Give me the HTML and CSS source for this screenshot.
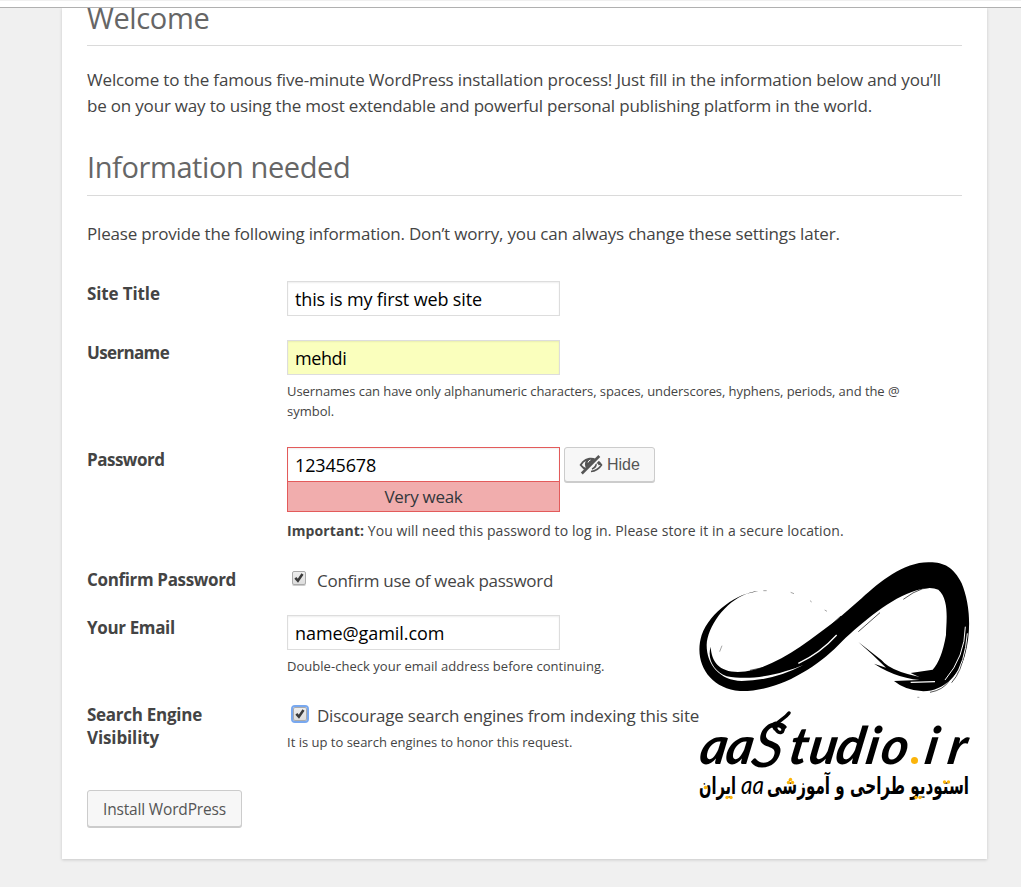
FILE: index.html
```html
<!DOCTYPE html>
<html lang="en">
<head>
<meta charset="utf-8">
<title>WordPress Installation</title>
<link rel="stylesheet" href="styles.css">
</head>
<body>
<div class="browser-edge"></div>
<main class="card">
  <h1 class="heading heading-first"><span class="t-welcome">Welcome</span></h1>
  <p class="intro"><span class="t-intro1">Welcome to the famous five-minute WordPress installation process! Just fill in the information below and you’ll</span><br><span class="t-intro2">be on your way to using the most extendable and powerful personal publishing platform in the world.</span></p>
  <h1 class="heading heading-second"><span class="t-info">Information needed</span></h1>
  <p class="lead"><span class="t-lead">Please provide the following information. Don’t worry, you can always change these settings later.</span></p>
  <form class="form">
    <div class="row row-title">
      <div class="label"><span class="t-l1">Site Title</span></div>
      <div class="cell"><div class="input"><span class="t-v1">this is my first web site</span></div></div>
    </div>
    <div class="row row-user">
      <div class="label"><span class="t-l2">Username</span></div>
      <div class="cell"><div class="input input-filled"><span class="t-v2">mehdi</span></div>
        <p class="hint"><span class="t-h1">Usernames can have only alphanumeric characters, spaces, underscores, hyphens, periods, and the @</span><br><span class="t-h2">symbol.</span></p></div>
    </div>
    <div class="row row-pass">
      <div class="label"><span class="t-l3">Password</span></div>
      <div class="cell">
        <div class="pass-line">
          <div class="pass-box"><div class="input input-weak"><span class="t-v3">12345678</span></div><div class="strength"><span class="t-weak">Very weak</span></div></div>
          <div class="button hide-button">
            <svg class="eye" viewBox="0 0 24 20" width="24" height="20">
              <path d="M.5 10C4.500 4 8.500 2.800 12 2.800Q14.500 2.800 17 4L8 16.500Q3.500 14 .5 10Z" fill="#555"/>
              <path d="M2.800 10Q4.500 7 6.800 6Q5 9.500 7 13Q4.500 12.200 2.800 10Z" fill="#f7f7f7"/>
              <path d="M9 7.500Q9.500 5.500 11.500 5" fill="none" stroke="#f7f7f7" stroke-width="1"/>
              <path d="M18 5.500Q21 7.500 22.500 10Q18.500 16 12 16.500M17 8.500Q17.500 12 13 14M17.700 7Q20 8.500 20.500 10" fill="none" stroke="#555" stroke-width="1.600"/>
              <path d="M21 1.800L4.500 18.300" stroke="#f7f7f7" stroke-width="4"/>
              <path d="M20.300 1L2.800 18.500" stroke="#555" stroke-width="2.700"/>
            </svg><span class="t-hide">Hide</span>
          </div>
        </div>
        <p class="hint hint-pass"><span class="t-h3"><b>Important:</b> You will need this password to log in. Please store it in a secure location.</span></p>
      </div>
    </div>
    <div class="row row-confirm">
      <div class="label"><span class="t-l4">Confirm Password</span></div>
      <div class="cell check-line"><span class="check"><svg viewBox="0 0 12 12" width="12" height="12"><path d="M2.300 5.800L4.900 8.700L9.500 2" fill="none" stroke="#3b3b3b" stroke-width="2.500"/></svg></span><span class="t-c1">Confirm use of weak password</span></div>
    </div>
    <div class="row row-email">
      <div class="label"><span class="t-l4">Your Email</span></div>
      <div class="cell"><div class="input"><span class="t-v4">name@gamil.com</span></div>
        <p class="hint"><span class="t-h4">Double-check your email address before continuing.</span></p></div>
    </div>
    <div class="row row-search">
      <div class="label"><span class="t-l6">Search Engine</span><br><span class="t-l1">Visibility</span></div>
      <div class="cell"><div class="check-line"><span class="check check-focus"><svg viewBox="0 0 12 12" width="12" height="12"><path d="M2.300 5.800L4.900 8.700L9.500 2" fill="none" stroke="#3b3b3b" stroke-width="2.500"/></svg></span><span class="t-c2">Discourage search engines from indexing this site</span></div>
        <p class="hint hint-search"><span>It is up to search engines to honor this request.</span></p></div>
    </div>
    <div class="button install"><span class="t-install">Install WordPress</span></div>
  </form>
</main>
<svg class="watermark" viewBox="0 0 290 260" width="290" height="260">
  <g transform="scale(.33333)">
    <path d="M205 123C145 128 60 185 35 255C10 335 55 415 150 423C270 426 390 345 455 275C520 215 600 145 680 121Q720 108 745 119C780 150 768 220 768 255Q755 330 728 359L662 369L705 389L612 393Q645 421 700 424C765 423 810 370 825 315C845 240 840 160 815 100C790 50 760 36 715 37C640 37 570 95 515 145L440 210C360 270 280 335 190 360C100 380 65 345 62 290C50 330 75 365 110 379C200 395 290 365 340 345Q250 392 155 393C90 391 50 345 50 285C52 230 105 155 170 131Z"/>
    <path d="M325 340Q390 310 440 255" fill="none" stroke="#fff" stroke-width="4"/>
    <path d="M180 361Q300 345 385 262T450 204M505 245L570 188M640 148Q700 102 748 114M833 190Q840 280 800 370M720 427Q760 420 778 392M825 300Q815 365 785 398" fill="none" stroke="#000" stroke-width="2"/>
    <path d="M826 230Q825 320 765 390M832 250Q825 340 790 385" fill="none" stroke="#fff" stroke-width="3"/>
    <path d="M505 276L575 331Q605 370 735 389Q640 398 552 341L588 353Q550 315 505 276Z"/>
    <path d="M662 397L735 395" stroke="#fff" stroke-width="4"/>
    <path d="M220 122h10M302 127l10 4M360 152l5 4M404 180l7 4M682 442h6M89 305l7-18" stroke="#777" stroke-width="2"/>
  </g>
  <text class="brand" transform="translate(0 214) skewX(-10)"><tspan x="8" y="0">a</tspan><tspan x="34">a</tspan><tspan class="cap" x="60" y="3">S</tspan><tspan x="97" y="0">t</tspan><tspan x="117">u</tspan><tspan x="144">d</tspan><tspan x="174">i</tspan><tspan x="189">o</tspan></text>
  <path d="M85 30C80 24 88 22 92 27C96 34 88 36 86 30C84 23 94 21 99 14" transform="translate(0 149)" fill="none" stroke="#000" stroke-width="3.500" stroke-linecap="round"/>
  <circle cx="224.500" cy="210.500" r="3.500" fill="#fbb40a"/>
  <text class="brand" transform="translate(0 214) skewX(-10)"><tspan x="233">i</tspan><tspan x="256">r</tspan></text>
  <text class="persian" x="279" y="244" direction="rtl" textLength="202" lengthAdjust="spacingAndGlyphs">استودیو طراحی و آموزشی</text>
  <text class="aa" x="51" y="244" textLength="23" lengthAdjust="spacingAndGlyphs">aa</text>
  <text class="persian" x="46" y="244" direction="rtl" textLength="37" lengthAdjust="spacingAndGlyphs">ایران</text>
  <g fill="#fbb40a">
    <circle cx="254.500" cy="232" r="1.700"/><circle cx="258.500" cy="232" r="1.700"/>
    <circle cx="226" cy="247.500" r="1.700"/><circle cx="230" cy="247.500" r="1.700"/>
    <circle cx="98.500" cy="232.500" r="1.700"/><circle cx="102.500" cy="232.500" r="1.700"/><circle cx="100.500" cy="229.500" r="1.700"/>
    <circle cx="37" cy="247.500" r="1.700"/><circle cx="41" cy="247.500" r="1.700"/>
    <circle cx="15.500" cy="237.500" r="1.800"/>
  </g>
</svg>
</body>
</html>
```
FILE: styles.css
```css
* { box-sizing: border-box; }
body { margin: 0; height: 887px; overflow: hidden; background: #f0f0f0; color: #444; font: 17px/26px "Open Sans", "Noto Sans", sans-serif; }
.browser-edge { height: 8px; background: #fff; border-top: 1px solid #f0f0f0; border-bottom: 1px solid #b0b0b0; }
.card { width: 925px; height: 851px; margin-left: 62px; padding: 0 25px; background: #fff; box-shadow: 0 1px 3px rgba(0,0,0,.17); overflow: hidden; clip-path: inset(0 -5px -5px -5px); }
span { white-space: nowrap; }
p, h1 { margin: 0; }
.heading { font-size: 29px; font-weight: 400; color: #666; line-height: 38px; border-bottom: 1px solid #dadada; }
.heading-first { height: 50px; margin-top: -12px; line-height: 43px; }
.heading-second { height: 48px; margin-top: 30px; }
.intro { margin-top: 20px; height: 52px; padding-top: 1px; }
.lead { margin-top: 25px; height: 26px; }
.form { display: flex; flex-direction: column; align-items: stretch; margin-top: 34px; }
.row { display: grid; grid-template-columns: 200px 1fr; }
.row-title { height: 59px; }
.row-user { height: 107px; }
.row-pass { height: 120px; }
.row-confirm { height: 48px; }
.row-email { height: 87px; }
.row-search { height: 88px; }
.label { font-weight: 700; line-height: 23px; padding-top: 1px; }
.input { width: 273px; height: 35px; padding-left: 7px; border: 1px solid #ddd; box-shadow: inset 0 1px 2px rgba(0,0,0,.07); color: #000; font-size: 18px; line-height: 34px; background: #fff; }
.input-filled { background: #faffbd; }
.input-weak { border-color: #e35b5b; }
.strength { height: 30px; width: 273px; text-align: center; background: #f1adad; border: 1px solid #e35b5b; border-top: 0; line-height: 29px; color: #32373c; }
.pass-line { display: flex; gap: 4px; align-items: flex-start; }
.button { display: flex; align-items: center; background: #f7f7f7; border: 1px solid #ccc; border-radius: 3px; box-shadow: 0 1px 0 #ccc; color: #555; }
.hide-button { width: 91px; height: 35px; padding-left: 14px; font: 16px "Liberation Sans", sans-serif; }
.eye { margin-right: 4px; }
.hint { font-size: 13px; line-height: 20px; margin-top: 6px; }
.hint-pass { margin-top: 9px; font-size: 14px; }
.check-line { display: flex; align-items: flex-start; line-height: 27px; height: 27px; }
.check { width: 14px; height: 14px; margin: 4px 11px 0 5px; border: 1px solid #aaa; border-radius: 2px; background: linear-gradient(#eee,#ddd); display: flex; box-shadow: 0 1px 0 #ccc; }
.check svg { display: block; }
.check-focus { margin: 5px 10px 0 6px; outline: 2px solid #78a8ef; }
.hint-search { margin-top: 3px; }
.install { width: 155px; height: 37px; padding-left: 15px; font-size: 15.5px; }

.t-welcome { letter-spacing: -.35px; }
.t-intro1 { letter-spacing: -.16px; }
.t-intro2 { letter-spacing: -.19px; }
.t-info { letter-spacing: -.4px; }
.t-lead { letter-spacing: -.185px; }
.t-l1 { letter-spacing: -.12px; }
.t-l2 { letter-spacing: -.65px; }
.t-l3 { letter-spacing: -.5px; }
.t-l4 { letter-spacing: -.35px; }
.t-l6 { letter-spacing: -.27px; }
.t-v1 { letter-spacing: -.14px; }
.t-v2 { letter-spacing: -.4px; }
.t-v3 { letter-spacing: -.15px; }
.t-v4 { letter-spacing: -.07px; }
.t-weak { letter-spacing: -.3px; }
.t-h1 { letter-spacing: -.065px; }
.t-h3 b { font-weight: 700; }
.t-h3 { letter-spacing: .09px; }
.t-h4 { letter-spacing: .03px; }
.t-c1 { letter-spacing: -.27px; }
.t-c2 { letter-spacing: -.21px; }
.t-install { letter-spacing: -.17px; }

.watermark { position: absolute; left: 690px; top: 550px; overflow: visible; }
.brand { font: italic 700 52px Lato, sans-serif; }
.brand .cap { font-size: 62px; font-weight: 400; }
.persian { font: 700 24px "DejaVu Sans", sans-serif; }
.aa { font: italic 400 25px Lato, sans-serif; }
```
